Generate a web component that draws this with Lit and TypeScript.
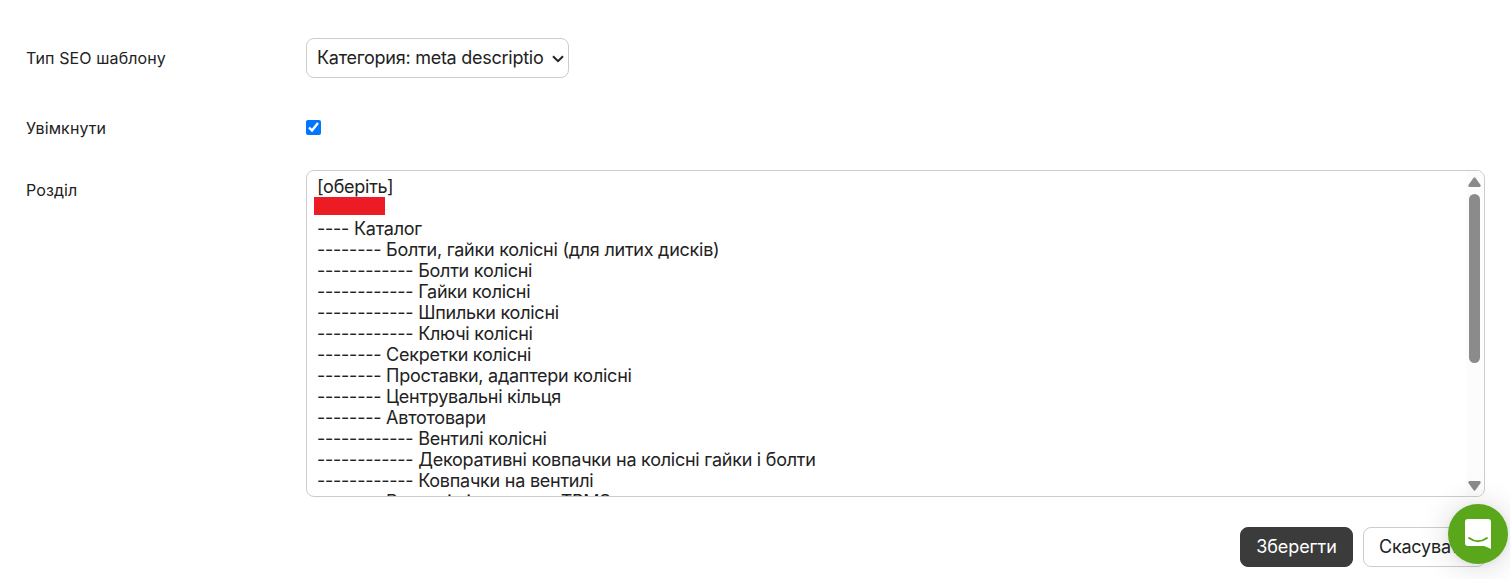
import { LitElement, html, css } from "lit";
import { customElement, property } from "lit/decorators.js";

interface Section {
  depth: number;
  name: string;
}

const SECTIONS: Section[] = [
  { depth: 0, name: "[оберіть]" },
  { depth: 0, name: "" },
  { depth: 1, name: "Каталог" },
  { depth: 2, name: "Болти, гайки колісні (для литих дисків)" },
  { depth: 3, name: "Болти колісні" },
  { depth: 3, name: "Гайки колісні" },
  { depth: 3, name: "Шпильки колісні" },
  { depth: 3, name: "Ключі колісні" },
  { depth: 2, name: "Секретки колісні" },
  { depth: 2, name: "Проставки, адаптери колісні" },
  { depth: 2, name: "Центрувальні кільця" },
  { depth: 2, name: "Автотовари" },
  { depth: 3, name: "Вентилі колісні" },
  { depth: 3, name: "Декоративні ковпачки на колісні гайки і болти" },
  { depth: 3, name: "Ковпачки на вентилі" },
  { depth: 2, name: "Вентилі під датчики TPMS" },
];

@customElement("section-list")
class SectionList extends LitElement {
  @property({ attribute: false }) sections: Section[] = [];

  static styles = css`
    :host {
      display: flex;
      box-sizing: border-box;
      height: 327px;
      border: 1px solid #ccc;
      border-radius: 8px;
      overflow: hidden;
      background: #fff;
      letter-spacing: -0.25px;
      font-feature-settings: "calt" 0;
    }
    .options {
      flex: 1;
      padding: 5px 0 0 10px;
      overflow: hidden;
    }
    .option {
      height: 21px;
      line-height: 21px;
      white-space: pre;
    }
    .redacted {
      width: 71px;
      height: 18px;
      margin: 0 0 3px -3px;
      background: #ed1c24;
    }
    .scrollbar {
      box-sizing: border-box;
      width: 17px;
      margin-right: 1px;
      padding: 6px 0 5px;
      background: #fcfcfc;
      display: flex;
      flex-direction: column;
      align-items: center;
    }
    .thumb {
      width: 11px;
      height: 169px;
      margin-top: 7px;
      border-radius: 6px;
      background: #8b8b8b;
    }
    svg {
      display: block;
      fill: #8b8b8b;
    }
    .down {
      margin-top: auto;
    }
  `;

  render() {
    return html`
      <div class="options">
        ${this.sections.map((s) =>
          s.name
            ? html`<div class="option">${"----".repeat(s.depth)}${s.depth ? " " : ""}${s.name}</div>`
            : html`<div class="redacted"></div>`
        )}
      </div>
      <div class="scrollbar">
        <svg width="13" height="10" viewBox="0 0 13 10"><path d="M5.6 .8Q6.5-.2 7.4.8L12.6 8Q13 9.6 11.6 10H1.4Q0 9.6.4 8Z" /></svg>
        <div class="thumb"></div>
        <svg class="down" width="13" height="10" viewBox="0 0 13 10"><path d="M5.6 9.2Q6.5 10.2 7.4 9.2L12.6 2Q13 .4 11.6 0H1.4Q0 .4.4 2Z" /></svg>
      </div>
    `;
  }
}

@customElement("app-root")
class AppRoot extends LitElement {
  static styles = css`
    :host {
      display: block;
      position: relative;
      box-sizing: border-box;
      height: 579px;
      padding: 38px 25px 0 26px;
      overflow: hidden;
      background: #fff;
      color: #222;
      font: 18px Inter, "Liberation Sans", sans-serif;
    }
    .row {
      display: grid;
      grid-template-columns: 280px 1fr;
      align-items: start;
    }
    .label {
      font-size: 16px;
      line-height: 40px;
      letter-spacing: 0.11px;
    }
    .type {
      height: 70px;
    }
    .enable {
      height: 62px;
    }
    .select {
      display: flex;
      align-items: center;
      box-sizing: border-box;
      width: 263px;
      height: 40px;
      padding: 0 4px 0 10px;
      border: 1px solid #ccc;
      border-radius: 8px;
      letter-spacing: -0.26px;
    }
    .value {
      width: 227px;
      padding-bottom: 2px;
      overflow: hidden;
      white-space: nowrap;
    }
    .chevron {
      margin: 2px 0 0 auto;
    }
    input {
      width: 15px;
      height: 15px;
      margin: 12px 0 0;
    }
    .actions {
      display: flex;
      justify-content: flex-end;
      gap: 10px;
      margin-top: 30px;
    }
    button {
      box-sizing: border-box;
      height: 40px;
      padding: 0 0 2px;
      border: 1px solid #ccc;
      border-radius: 8px;
      background: #fff;
      color: #222;
      font: inherit;
      letter-spacing: -0.1px;
    }
    .save {
      width: 113px;
      border-color: #3b3b3b;
      background: #3b3b3b;
      color: #fff;
    }
    .cancel {
      width: 122px;
      padding-left: 15px;
      text-align: left;
      letter-spacing: -0.22px;
    }
    .chat {
      position: absolute;
      left: 1448px;
      top: 504px;
      display: grid;
      place-items: center;
      width: 60px;
      height: 60px;
      border-radius: 50%;
      background: #5ba71b;
      box-shadow: 0 1px 6px rgba(0, 0, 0, 0.06), 0 2px 32px rgba(0, 0, 0, 0.16);
    }
  `;

  render() {
    return html`
      <div class="row type">
        <div class="label">Тип SEO шаблону</div>
        <div class="select">
          <span class="value">Категория: meta description</span>
          <svg class="chevron" width="12" height="8" viewBox="0 0 12 8"><path d="M1 1.2 6 6.2 11 1.2" fill="none" stroke="#222" stroke-width="2" /></svg>
        </div>
      </div>
      <div class="row enable">
        <div class="label">Увімкнути</div>
        <input type="checkbox" checked />
      </div>
      <div class="row">
        <div class="label">Розділ</div>
        <section-list .sections=${SECTIONS}></section-list>
      </div>
      <div class="actions">
        <button class="save">Зберегти</button>
        <button class="cancel">Скасувати</button>
      </div>
      <div class="chat">
        <svg width="28" height="32" viewBox="0 0 28 32"><path d="M4 1H24Q27 1 27 4V31Q23 29 20 28H4Q1 28 1 25V4Q1 1 4 1Z" fill="#fff" /><path d="M5 20Q14 26.500 23 20" fill="none" stroke="#5ba71b" stroke-width="1.900" stroke-linecap="round" /></svg>
      </div>
    `;
  }
}
